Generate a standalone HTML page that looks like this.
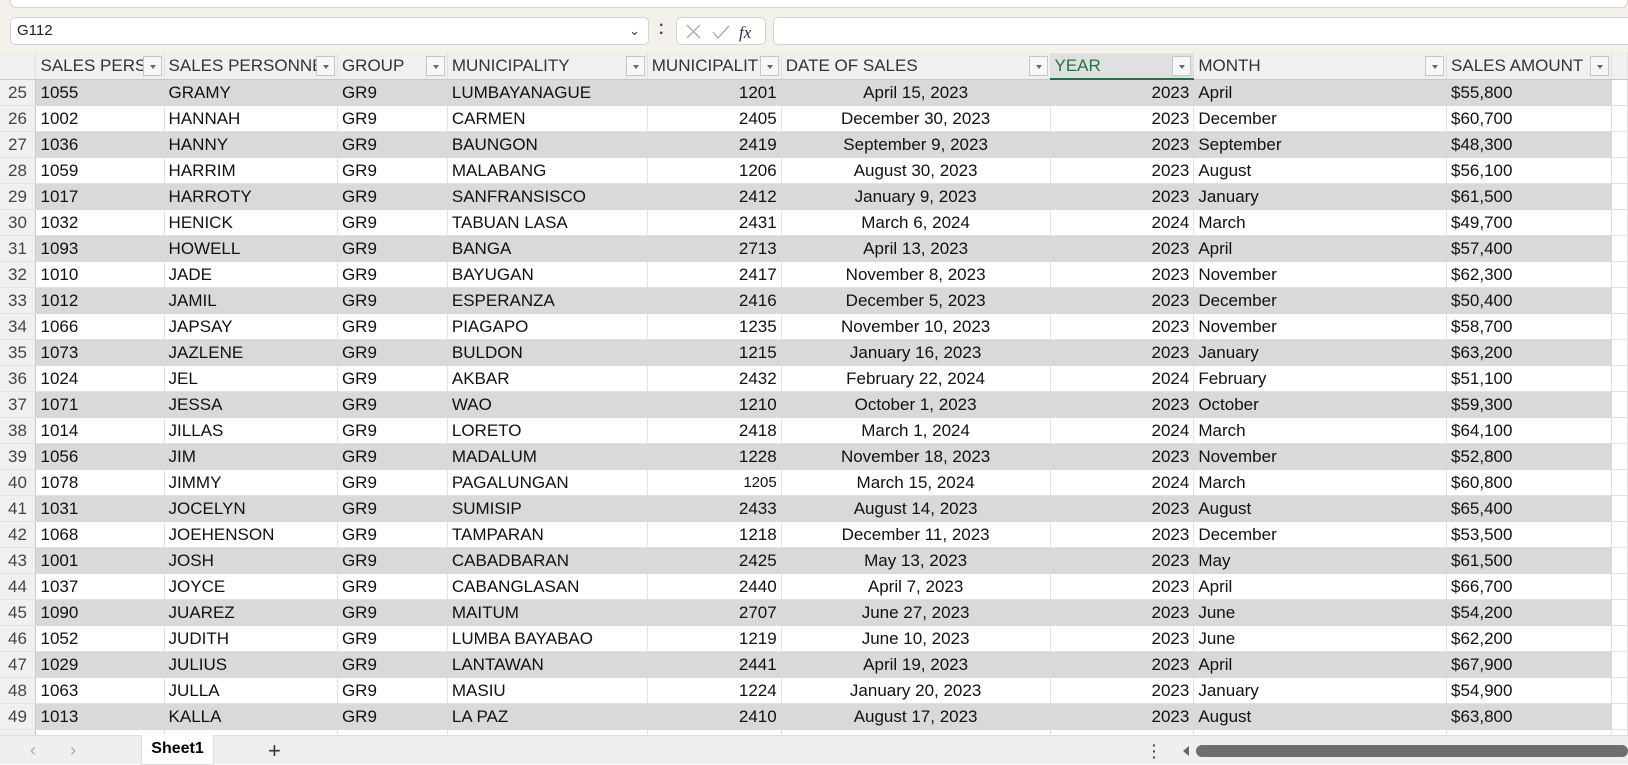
<!DOCTYPE html>
<html><head><meta charset="utf-8"><style>
*{box-sizing:border-box;margin:0;padding:0}
body{width:1628px;height:764px;overflow:hidden;background:#fff;font-family:"Liberation Sans",sans-serif;position:relative}
.top{position:absolute;left:0;top:0;width:1628px;height:53px;background:#f4f0ea}
.strip{position:absolute;left:10px;top:-2px;width:1618px;height:10px;background:#fff;border:1px solid #d8d4ce;border-radius:0 0 6px 6px}
.nb{position:absolute;left:10px;top:17px;width:639px;height:28px;background:#fff;border:1px solid #d6d2cc;border-radius:5px;font-size:15px;line-height:26px;padding-left:6px;color:#222}
.nb .ch{position:absolute;right:8px;top:0;font-size:13px;color:#333}
.dots{position:absolute;left:659px;top:22px;font-size:16px;color:#444;line-height:8px;font-weight:bold}
.fx{position:absolute;left:676px;top:17px;width:90px;height:28px;background:#fff;border:1px solid #d6d2cc;border-radius:5px}
.fi{position:absolute;left:773px;top:17px;width:860px;height:28px;background:#fff;border:1px solid #d6d2cc;border-radius:5px 0 0 5px}
table{position:absolute;left:0;top:53px;border-collapse:collapse;table-layout:fixed;font-size:17px}
tr{height:26px}
td{height:26px;padding:0 4px;white-space:nowrap;overflow:hidden;border-right:1px solid #e1e1e1;border-bottom:1px solid #e1e1e1;color:#111;line-height:25px}
tr.h td{height:26px;background:#f0f0f0;color:#333;border-bottom:1px solid #c8c8c8;border-right:1px solid #e0e0e0;position:relative}
td.rn{background:#f0f0f0;color:#444;text-align:left;padding-left:8px;border-right:1px solid #c8c8c8}
tr.g td{background:#d9d9d9;border-color:#d9d9d9}
tr.g td.rn{background:#f0f0f0;border-right-color:#c8c8c8;border-bottom-color:#e1e1e1}
tr.g td.x{background:#fff;border-color:#e1e1e1}
.r{text-align:right}.c{text-align:center}
.f{position:absolute;right:2px;top:3px;width:19px;height:20px;border:1px solid #c6c6c6;background:#f7f7f7}
.f:after{content:"";position:absolute;left:6px;top:8px;border:3px solid transparent;border-top:4px solid #666}
.tabs{position:absolute;left:0;top:735px;width:1628px;height:29px;background:#f0efed;border-top:1px solid #ddd}
.sh{position:absolute;left:141px;top:-1px;width:73px;height:30px;background:#fff;font-size:16px;font-weight:bold;text-align:center;line-height:28px;border:1px solid #ddd;border-top:none}
.sb{position:absolute;left:1196px;top:9px;width:432px;height:12px;background:#6e6e6e;border-radius:6px}
</style></head><body>
<div class="top"><div class="strip"></div>
<div class="nb">G112<span class="ch">&#8964;</span></div>
<div class="dots">·<br>·</div>
<div class="fx"><svg width="90" height="28"><path d="M10 7l13 13M23 7L10 20M36 14l5 6 11-12" stroke="#aaa" stroke-width="1.3" fill="none"/><text x="62" y="20" font-family="Liberation Serif" font-style="italic" font-size="17" fill="#333">fx</text></svg></div>
<div class="fi"></div></div>
<table>
<colgroup><col style="width:36px"><col style="width:128px"><col style="width:173px"><col style="width:110px"><col style="width:200px"><col style="width:134px"><col style="width:269px"><col style="width:144px"><col style="width:253px"><col style="width:165px"><col style="width:16px"></colgroup>
<tr class="h"><td style="background:#f0f0f0"></td><td>SALES PERSO<span class="f"></span></td><td>SALES PERSONNEL<span class="f"></span></td><td>GROUP<span class="f"></span></td><td>MUNICIPALITY<span class="f"></span></td><td>MUNICIPALIT<span class="f"></span></td><td>DATE OF SALES<span class="f"></span></td><td style="background:#e0e0e0;color:#217346;border-bottom:2px solid #217346">YEAR<span class="f"></span></td><td>MONTH<span class="f"></span></td><td>SALES AMOUNT<span class="f"></span></td><td></td></tr>
<tr class="g"><td class="rn">25</td><td>1055</td><td>GRAMY</td><td>GR9</td><td>LUMBAYANAGUE</td><td class="r">1201</td><td class="c">April 15, 2023</td><td class="r">2023</td><td>April</td><td>$55,800</td><td class="x"></td></tr>
<tr><td class="rn">26</td><td>1002</td><td>HANNAH</td><td>GR9</td><td>CARMEN</td><td class="r">2405</td><td class="c">December 30, 2023</td><td class="r">2023</td><td>December</td><td>$60,700</td><td></td></tr>
<tr class="g"><td class="rn">27</td><td>1036</td><td>HANNY</td><td>GR9</td><td>BAUNGON</td><td class="r">2419</td><td class="c">September 9, 2023</td><td class="r">2023</td><td>September</td><td>$48,300</td><td class="x"></td></tr>
<tr><td class="rn">28</td><td>1059</td><td>HARRIM</td><td>GR9</td><td>MALABANG</td><td class="r">1206</td><td class="c">August 30, 2023</td><td class="r">2023</td><td>August</td><td>$56,100</td><td></td></tr>
<tr class="g"><td class="rn">29</td><td>1017</td><td>HARROTY</td><td>GR9</td><td>SANFRANSISCO</td><td class="r">2412</td><td class="c">January 9, 2023</td><td class="r">2023</td><td>January</td><td>$61,500</td><td class="x"></td></tr>
<tr><td class="rn">30</td><td>1032</td><td>HENICK</td><td>GR9</td><td>TABUAN LASA</td><td class="r">2431</td><td class="c">March 6, 2024</td><td class="r">2024</td><td>March</td><td>$49,700</td><td></td></tr>
<tr class="g"><td class="rn">31</td><td>1093</td><td>HOWELL</td><td>GR9</td><td>BANGA</td><td class="r">2713</td><td class="c">April 13, 2023</td><td class="r">2023</td><td>April</td><td>$57,400</td><td class="x"></td></tr>
<tr><td class="rn">32</td><td>1010</td><td>JADE</td><td>GR9</td><td>BAYUGAN</td><td class="r">2417</td><td class="c">November 8, 2023</td><td class="r">2023</td><td>November</td><td>$62,300</td><td></td></tr>
<tr class="g"><td class="rn">33</td><td>1012</td><td>JAMIL</td><td>GR9</td><td>ESPERANZA</td><td class="r">2416</td><td class="c">December 5, 2023</td><td class="r">2023</td><td>December</td><td>$50,400</td><td class="x"></td></tr>
<tr><td class="rn">34</td><td>1066</td><td>JAPSAY</td><td>GR9</td><td>PIAGAPO</td><td class="r">1235</td><td class="c">November 10, 2023</td><td class="r">2023</td><td>November</td><td>$58,700</td><td></td></tr>
<tr class="g"><td class="rn">35</td><td>1073</td><td>JAZLENE</td><td>GR9</td><td>BULDON</td><td class="r">1215</td><td class="c">January 16, 2023</td><td class="r">2023</td><td>January</td><td>$63,200</td><td class="x"></td></tr>
<tr><td class="rn">36</td><td>1024</td><td>JEL</td><td>GR9</td><td>AKBAR</td><td class="r">2432</td><td class="c">February 22, 2024</td><td class="r">2024</td><td>February</td><td>$51,100</td><td></td></tr>
<tr class="g"><td class="rn">37</td><td>1071</td><td>JESSA</td><td>GR9</td><td>WAO</td><td class="r">1210</td><td class="c">October 1, 2023</td><td class="r">2023</td><td>October</td><td>$59,300</td><td class="x"></td></tr>
<tr><td class="rn">38</td><td>1014</td><td>JILLAS</td><td>GR9</td><td>LORETO</td><td class="r">2418</td><td class="c">March 1, 2024</td><td class="r">2024</td><td>March</td><td>$64,100</td><td></td></tr>
<tr class="g"><td class="rn">39</td><td>1056</td><td>JIM</td><td>GR9</td><td>MADALUM</td><td class="r">1228</td><td class="c">November 18, 2023</td><td class="r">2023</td><td>November</td><td>$52,800</td><td class="x"></td></tr>
<tr><td class="rn">40</td><td>1078</td><td>JIMMY</td><td>GR9</td><td>PAGALUNGAN</td><td class="r" style="font-size:15px">1205</td><td class="c">March 15, 2024</td><td class="r">2024</td><td>March</td><td>$60,800</td><td></td></tr>
<tr class="g"><td class="rn">41</td><td>1031</td><td>JOCELYN</td><td>GR9</td><td>SUMISIP</td><td class="r">2433</td><td class="c">August 14, 2023</td><td class="r">2023</td><td>August</td><td>$65,400</td><td class="x"></td></tr>
<tr><td class="rn">42</td><td>1068</td><td>JOEHENSON</td><td>GR9</td><td>TAMPARAN</td><td class="r">1218</td><td class="c">December 11, 2023</td><td class="r">2023</td><td>December</td><td>$53,500</td><td></td></tr>
<tr class="g"><td class="rn">43</td><td>1001</td><td>JOSH</td><td>GR9</td><td>CABADBARAN</td><td class="r">2425</td><td class="c">May 13, 2023</td><td class="r">2023</td><td>May</td><td>$61,500</td><td class="x"></td></tr>
<tr><td class="rn">44</td><td>1037</td><td>JOYCE</td><td>GR9</td><td>CABANGLASAN</td><td class="r">2440</td><td class="c">April 7, 2023</td><td class="r">2023</td><td>April</td><td>$66,700</td><td></td></tr>
<tr class="g"><td class="rn">45</td><td>1090</td><td>JUAREZ</td><td>GR9</td><td>MAITUM</td><td class="r">2707</td><td class="c">June 27, 2023</td><td class="r">2023</td><td>June</td><td>$54,200</td><td class="x"></td></tr>
<tr><td class="rn">46</td><td>1052</td><td>JUDITH</td><td>GR9</td><td>LUMBA BAYABAO</td><td class="r">1219</td><td class="c">June 10, 2023</td><td class="r">2023</td><td>June</td><td>$62,200</td><td></td></tr>
<tr class="g"><td class="rn">47</td><td>1029</td><td>JULIUS</td><td>GR9</td><td>LANTAWAN</td><td class="r">2441</td><td class="c">April 19, 2023</td><td class="r">2023</td><td>April</td><td>$67,900</td><td class="x"></td></tr>
<tr><td class="rn">48</td><td>1063</td><td>JULLA</td><td>GR9</td><td>MASIU</td><td class="r">1224</td><td class="c">January 20, 2023</td><td class="r">2023</td><td>January</td><td>$54,900</td><td></td></tr>
<tr class="g"><td class="rn">49</td><td>1013</td><td>KALLA</td><td>GR9</td><td>LA PAZ</td><td class="r">2410</td><td class="c">August 17, 2023</td><td class="r">2023</td><td>August</td><td>$63,800</td><td class="x"></td></tr>
<tr><td class="rn"></td><td></td><td></td><td></td><td></td><td></td><td></td><td></td><td></td><td></td><td></td></tr>
</table>
<div class="tabs">
<span style="position:absolute;left:30px;top:4px;color:#aaa;font-size:18px">&#8249;</span>
<span style="position:absolute;left:70px;top:4px;color:#aaa;font-size:18px">&#8250;</span>
<div class="sh">Sheet1</div>
<span style="position:absolute;left:268px;top:2px;font-size:22px;color:#333">+</span>
<span style="position:absolute;left:1152px;top:6px;font-size:14px;color:#444;line-height:6px;font-weight:bold">·<br>·<br>·</span>
<span style="position:absolute;left:1183px;top:10px;border:5px solid transparent;border-right:6px solid #666;border-left:none"></span>
<div class="sb"></div>
</div>
</body></html>
